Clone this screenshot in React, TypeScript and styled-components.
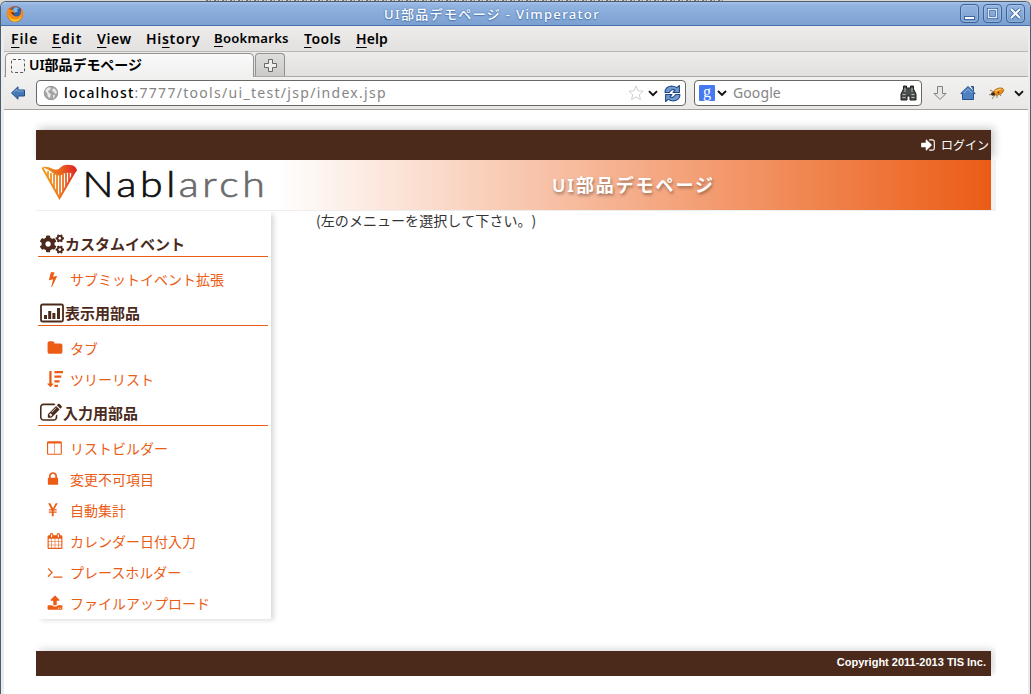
import React from "react";
import styled, { createGlobalStyle } from "styled-components";
import { FaCogs } from "react-icons/fa";

const BROWN = "#4b2a1b";
const ORANGE = "#eb5c15";
const UI = `"Noto Sans", "Noto Sans CJK JP", sans-serif`;
const JP = `"Noto Sans CJK JP", sans-serif`;

const GlobalStyle = createGlobalStyle`
  * { box-sizing: border-box; }
  body { margin: 0; background: #fff; overflow: hidden; }
`;

const Desktop = styled.div`
  width: 1031px;
  height: 694px;
  display: flex;
  flex-direction: column;
  background: #d9d9d1;
  overflow: hidden;
`;
const Backdrop = styled.div`
  height: 1px;
  flex: none;
  margin-left: 206px;
  width: 518px;
  background: repeating-linear-gradient(90deg, #77746c 0 2px, #c9c8c0 2px 4px, #8d8a80 4px 5px, #d9d9d1 5px 8px);
`;
const Frame = styled.div`
  flex: 1;
  display: flex;
  flex-direction: column;
  background: #ececea;
  border: 1px solid #4c5d72;
  border-bottom: 0;
  border-radius: 6px 6px 0 0;
  overflow: hidden;
`;
const TitleBar = styled.div`
  height: 24px;
  flex: none;
  display: flex;
  align-items: center;
  padding: 0 5px 0 5px;
  background: linear-gradient(#a5c2e9, #92b3e0 15%, #7ba0d1);
  border-bottom: 1px solid #4673ab;
`;
const WindowTitle = styled.div`
  flex: 1;
  padding-left: 0;
  text-align: center;
  font: 500 13px/22px ${UI};
  letter-spacing: 1.35px;
  color: #fff;
  text-shadow: 0 0 2px #3f6aa5, 0 1px 1px #5580b8;
  white-space: nowrap;
`;
const WindowButtons = styled.div`
  display: flex;
  gap: 4px;
`;
const WindowButton = styled.div`
  width: 19px;
  height: 19px;
  border: 1px solid #3c6396;
  border-radius: 4px;
  background: linear-gradient(#94b5e1, #799fd0);
  box-shadow: inset 0 0 0 1px rgba(255, 255, 255, 0.18);
  svg { display: block; }
`;
const Chrome = styled.div`
  flex: 1;
  display: flex;
  flex-direction: column;
  margin: 0 2px 0 3px;
  min-height: 0;
`;
const MenuBar = styled.div`
  height: 26px;
  flex: none;
  display: flex;
  padding-left: 7px;
  background: linear-gradient(#edecea, #e2e1df);
  border-bottom: 1px solid #b9b8b6;
  font: 600 14px/25px ${UI};
  color: #000;
`;
const MenuItem = styled.div<{ $w: number; $ls?: number; $fs?: number }>`
  width: ${(p) => p.$w}px;
  font-size: ${(p) => p.$fs ?? 14}px;
  letter-spacing: ${(p) => p.$ls ?? 0.6}px;
  white-space: nowrap;
  u { text-decoration-thickness: 1px; text-underline-offset: 3px; text-decoration-skip-ink: none; }
`;
const TabStrip = styled.div`
  height: 25px;
  flex: none;
  display: flex;
  gap: 1px;
  padding: 1px 0 0 1px;
  background: linear-gradient(#edecea, #e1e0de);
  border-bottom: 1px solid #aaa9a7;
`;
const Tab = styled.div`
  width: 249px;
  height: 24px;
  display: flex;
  align-items: center;
  gap: 4px;
  padding-left: 5px;
  border: 1px solid #929190;
  border-bottom: 0;
  border-radius: 5px 5px 0 0;
  background: linear-gradient(#fafafa, #f0f0ef);
  font: 600 14px/20px ${UI};
  color: #000;
  white-space: nowrap;
`;
const TabTitle = styled.span`
  padding-bottom: 2px;
  letter-spacing: -0.05px;
`;
const EmptyFavicon = styled.span`
  width: 14px;
  height: 14px;
  border: 1px dashed #555;
  border-radius: 2px;
`;
const NewTab = styled.div`
  width: 30px;
  height: 23px;
  border: 1px solid #929190;
  border-bottom: 0;
  border-radius: 4px 4px 0 0;
  background: linear-gradient(#dededd, #cbcac8);
  display: flex;
  align-items: center;
  justify-content: center;
`;
const NavBar = styled.div`
  height: 33px;
  flex: none;
  display: flex;
  align-items: center;
  padding-left: 6px;
  background: linear-gradient(#f1f1f0, #e9e8e6);
  border-bottom: 1px solid #a3a2a0;
`;
const Field = styled.div<{ $w: number; $ml: number; $pl: number }>`
  width: ${(p) => p.$w}px;
  height: 26px;
  flex: none;
  margin-left: ${(p) => p.$ml}px;
  padding: 0 4px 0 ${(p) => p.$pl}px;
  display: flex;
  align-items: center;
  background: #fff;
  border: 1px solid #686764;
  border-radius: 4px;
  font: 400 14px/22px ${UI};
  color: #858585;
  white-space: nowrap;
`;
const Url = styled.span`
  flex: 1;
  padding-left: 5px;
  letter-spacing: 1.3px;
  b { font-weight: 500; color: #000; letter-spacing: 1.1px; }
`;
const SearchText = styled.span`
  flex: 1;
  padding-left: 4px;
  letter-spacing: 0.1px;
`;
const EngineBadge = styled.span`
  width: 16px;
  height: 16px;
  flex: none;
  border-radius: 1px;
  background: #4479f0;
  color: #fff;
  text-align: center;
  font: 16px/13px "Liberation Serif", serif;
`;
const NavIcons = styled.div`
  display: flex;
  align-items: center;
  gap: 12px;
  margin-left: 10px;
`;
const Viewport = styled.div`
  flex: 1;
  min-height: 0;
  padding: 20px 0 0 32px;
  background: #fff;
  overflow: hidden;
`;
const Site = styled.div`
  width: 955px;
  color: #333;
  font: 400 14px/20px ${JP};
`;
const TopBar = styled.div`
  height: 30px;
  display: flex;
  justify-content: flex-end;
  align-items: center;
  gap: 5px;
  padding-right: 2px;
  background: ${BROWN};
  color: #fff;
  font-size: 12px;
  box-shadow: 3px -2px 8px rgba(0, 0, 0, 0.22);
`;
const Banner = styled.header`
  position: relative;
  height: 51px;
  display: flex;
  background: #fff;
  border-bottom: 1px solid #eee;
  box-shadow: 5px 0 0 #f1f1f1;
`;
const Logo = styled.div`
  width: 240px;
  height: 50px;
`;
const BannerTitle = styled.h1`
  flex: 1;
  margin: 0;
  height: 50px;
  padding-left: 276px;
  background: linear-gradient(90deg, #fff, ${ORANGE});
  color: #fff;
  font: 600 18px/50px ${UI};
  letter-spacing: 1.9px;
  text-shadow: 1px 2px 3px rgba(70, 50, 40, 0.5);
  white-space: nowrap;
`;
const Body = styled.div`
  display: flex;
  align-items: flex-start;
`;
const SideNav = styled.nav`
  width: 235px;
  height: 408px;
  padding: 21px 3px 0 2px;
  background: #fff;
  box-shadow: 4px 2px 5px -1px rgba(0, 0, 0, 0.15);
  clip-path: inset(0 -12px -12px 0);
`;
const Group = styled.h2`
  height: 25px;
  margin: 0 0 6px;
  display: flex;
  align-items: center;
  gap: 1px;
  padding-left: 2px;
  border-bottom: 1px solid ${ORANGE};
  color: ${BROWN};
  font: 600 15px/24px ${JP};
  white-space: nowrap;
`;
const Item = styled.div`
  height: 31px;
  display: flex;
  align-items: center;
  padding-left: 9px;
  color: ${ORANGE};
  font-size: 14px;
  white-space: nowrap;
`;
const ItemIcon = styled.span<{ $narrow?: boolean }>`
  width: 23px;
  height: 16px;
  svg { display: block; margin-left: ${(p) => (p.$narrow ? -2.5 : 0.4)}px; }
`;
const Spacer = styled.div<{ $h: number }>`
  height: ${(p) => p.$h}px;
`;
const Message = styled.p`
  margin: -1px 0 0 45px;
  letter-spacing: 0.05px;
  text-spacing-trim: space-all;
  font-kerning: none;
`;
const Footer = styled.footer`
  height: 25px;
  margin-top: 32px;
  padding-right: 5px;
  background: ${BROWN};
  color: #fff;
  text-align: right;
  font: bold 11px/23px "Liberation Sans", sans-serif;
  box-shadow: 3px -2px 7px rgba(0, 0, 0, 0.15);
  clip-path: inset(-10px -5px 0 0);
`;

const Glyph = ({ d, size = 16 }: { d: string; size?: number }) => (
  <svg width={size} height={size} viewBox="0 0 1792 1792" fill="currentColor">
    <path d={d} />
  </svg>
);

const BOLT = "M1333 566q18 20 7 44l-540 1157q-13 25-42 25-4 0-14-2-17-5-25.500-19t-4.500-30l197-808-406 101q-4 1-12 1-18 0-31-11-18-15-13-39l201-825q4-14 16-23t28-9h328q19 0 32 12.500t13 29.500q0 8-5 18l-171 463 396-98q8-2 12-2 19 0 34 15z";
const FOLDER = "M1728 608v704q0 92-66 158t-158 66h-1216q-92 0-158-66t-66-158v-960q0-92 66-158t158-66h320q92 0 158 66t66 158v32h672q92 0 158 66t66 158z";
const SORT = "M736 1440q0 12-10 24l-319 319q-10 9-23 9-12 0-23-9l-320-320q-15-16-7-35 8-20 30-20h192v-1376q0-14 9-23t23-9h192q14 0 23 9t9 23v1376h192q14 0 23 9t9 23zM832 0h960v256h-960zM832 512h768v256h-768zM832 1024h576v256h-576zM832 1536h384v256h-384z";
const COLUMNS = "M160 1536h672v-1152h-704v1120q0 13 9.500 22.500t22.500 9.500zm1376-32v-1120h-640v1152h608q13 0 22.500-9.500t9.500-22.500zm128-1216v1216q0 66-47 113t-113 47h-1344q-66 0-113-47t-47-113v-1216q0-66 47-113t113-47h1344q66 0 113 47t47 113z";
const LOCK = "M640 768h512v-192q0-106-75-181t-181-75-181 75-75 181v192zm832 96v576q0 40-28 68t-68 28h-960q-40 0-68-28t-28-68v-576q0-40 28-68t68-28h32v-192q0-184 132-316t316-132 316 132 132 316v192h32q40 0 68 28t28 68z";
const YEN = "M360 128h240l296 560 296-560h240l-390 690h260v130h-330v120h330v130h-330v400h-210v-400h-330v-130h330v-120h-330v-130h260z";
const CALENDAR = "M192 1664h288v-288h-288v288zm352 0h320v-288h-320v288zm-352-352h288v-320h-288v320zm352 0h320v-320h-320v320zm-352-384h288v-288h-288v288zm736 736h320v-288h-320v288zm-384-736h320v-288h-320v288zm768 736h288v-288h-288v288zm-384-352h320v-320h-320v320zm-352-864v-288q0-13-9.500-22.500t-22.500-9.500h-64q-13 0-22.500 9.500t-9.500 22.500v288q0 13 9.500 22.500t22.500 9.500h64q13 0 22.500-9.500t9.500-22.500zm736 864h288v-320h-288v320zm-384-384h320v-288h-320v288zm384 0h288v-288h-288v288zm32-480v-288q0-13-9.500-22.500t-22.500-9.500h-64q-13 0-22.500 9.500t-9.500 22.500v288q0 13 9.500 22.500t22.500 9.500h64q13 0 22.500-9.500t9.500-22.500zm384-64v1280q0 52-38 90t-90 38h-1408q-52 0-90-38t-38-90v-1280q0-52 38-90t90-38h128v-96q0-66 47-113t113-47h64q66 0 113 47t47 113v96h384v-96q0-66 47-113t113-47h64q66 0 113 47t47 113v96h128q52 0 90 38t38 90z";
const TERMINAL = "M649 983l-466 466q-10 10-23 10t-23-10l-50-50q-10-10-10-23t10-23l393-393-393-393q-10-10-10-23t10-23l50-50q10-10 23-10t23 10l466 466q10 10 10 23t-10 23zm1079 457v64q0 14-9 23t-23 9h-960q-14 0-23-9t-9-23v-64q0-14 9-23t23-9h960q14 0 23 9t9 23z";
const UPLOAD = "M1344 1472q0-26-19-45t-45-19-45 19-19 45 19 45 45 19 45-19 19-45zm256 0q0-26-19-45t-45-19-45 19-19 45 19 45 45 19 45-19 19-45zm128-224v320q0 40-28 68t-68 28h-1472q-40 0-68-28t-28-68v-320q0-40 28-68t68-28h427q21 56 70.500 92t110.500 36h256q61 0 110.500-36t70.500-92h427q40 0 68 28t28 68zm-325-648q-17 40-59 40h-256v448q0 26-19 45t-45 19h-256q-26 0-45-19t-19-45v-448h-256q-42 0-59-40-17-39 14-69l448-448q18-19 45-19t45 19l448 448q31 30 14 69z";
const PENCIL = "M888 1184l116-116-152-152-116 116v56h96v96h56zm440-720q-16-16-33 1l-350 350q-17 17-1 33t33-1l350-350q17-17 1-33zm80 594v190q0 119-84.500 203.500t-203.500 84.500h-832q-119 0-203.500-84.500t-84.500-203.500v-832q0-119 84.500-203.500t203.500-84.500h832q63 0 117 25 15 7 18 23 3 17-9 29l-49 49q-14 14-32 8-23-6-45-6h-832q-66 0-113 47t-47 113v832q0 66 47 113t113 47h832q66 0 113-47t47-113v-126q0-13 9-22l64-64q15-15 35-7t20 29zm-96-738l288 288-672 672h-288v-288zm444 132l-92 92-288-288 92-92q28-28 68-28t68 28l152 152q28 28 28 68t-28 68z";
const SIGN_IN = "M1312 896q0 26-19 45l-544 544q-19 19-45 19t-45-19-19-45v-288h-448q-26 0-45-19t-19-45v-384q0-26 19-45t45-19h448v-288q0-26 19-45t45-19 45 19l544 544q19 19 19 45zm352-352v704q0 119-84.500 203.500t-203.500 84.500h-320q-13 0-22.500-9.500t-9.500-22.500q0-4-1-20t-.5-26.500 3-23.500 10-19.500 20.500-6.500h320q66 0 113-47t47-113v-704q0-66-47-113t-113-47h-312l-11.500-1-11.500-3-8-5.500-7-9-2-13.500q0-4-1-20t-.5-26.500 3-23.500 10-19.500 20.500-6.500h320q119 0 203.500 84.500t84.500 203.500z";

const FirefoxIcon = () => (
  <svg width="18" height="18" viewBox="0 0 18 18">
    <circle cx="9" cy="9" r="8" fill="#d9540c" />
    <circle cx="10" cy="7" r="5.5" fill="#2d62ad" />
    <path d="M8 2.500q3-1 5 1l-2 1 1 2-3 1-2-2z" fill="#7db7e8" />
    <path d="M2 3l2 2 3-.5q-.5 2 1.500 2.500l1 1-3 1q1 3 5 2.500 3-.5 3.500-5l.5-3q2.500 3 1.500 7-2 6-8 6T1 10.500Q.5 6 2 3z" fill="#f48a13" />
    <path d="M2.500 9q1 5 6 5.500 5 0 7-4-1 6-7 6.300Q3 16 2.500 9z" fill="#fcc52d" />
    <path d="M4.500 7l3 .5 2 1.500-3 .5z" fill="#7a2609" />
  </svg>
);

const ChevronSvg = styled.svg<{ $ml?: number }>`
  flex: none;
  margin-left: ${(p) => p.$ml ?? 0}px;
`;
const Chevron = ({ ml }: { ml?: number }) => (
  <ChevronSvg $ml={ml} width="10" height="7" viewBox="0 0 10 7">
    <path d="M1 1.200l4 4 4-4" fill="none" stroke="#111" strokeWidth="1.900" />
  </ChevronSvg>
);

const BackArrow = () => (
  <svg width="16" height="16" viewBox="0 0 16 16">
    <path d="M1.500 8L8 1.800V5h6.500v6H8v3.200z" fill="#4778b5" stroke="#1f4a85" strokeLinejoin="round" />
    <path d="M3.500 7.500L7 4v2h6.500" fill="none" stroke="#80a8d6" />
  </svg>
);

const Globe = () => (
  <svg width="16" height="16" viewBox="0 0 16 16">
    <circle cx="8" cy="8" r="7" fill="#a3a3a3" />
    <path d="M3 4l3-2 2 1-1 2-2 1 1 2 2 1-1 4-2-1-1-4-2-2zM10 3l3 2 1 3-2 1-1-2-2-1zM10 10l2 0-1 3-1 0z" fill="#e9e9e9" />
    <circle cx="8" cy="8" r="6.700" fill="none" stroke="#9a9a9a" />
  </svg>
);

const Star = styled.svg`
  margin-right: 4px;
`;
const Reload = styled.svg`
  margin-left: 6px;
`;

const HarpLogo = () => (
  <svg width="240" height="50" viewBox="0 0 240 50">
    <defs>
      <linearGradient id="harp" x1="0" x2="1" y1="0" y2="0">
        <stop offset="0" stopColor="#f0a01c" />
        <stop offset="0.550" stopColor="#e9641d" />
        <stop offset="1" stopColor="#df1f26" />
      </linearGradient>
      <linearGradient id="harpStrings" gradientUnits="userSpaceOnUse" x1="6" x2="40" y1="0" y2="0">
        <stop offset="0" stopColor="#f0a01c" />
        <stop offset="0.500" stopColor="#ec7a18" />
        <stop offset="1" stopColor="#df2a20" />
      </linearGradient>
    </defs>
    <path d="M5 7q7-1 12 2 5 2 8-2 3-3 9-2 5 0 7 5-2 4-6 3-5-1-8 1-4 3-9 0-5-5-13-7z" fill="url(#harp)" />
    <path d="M6.500 8L23.500 38 40 9.500" fill="none" stroke="url(#harpStrings)" strokeWidth="2" />
    <path d="M12 11v7M15 13v10M18 14v15M21 14v20M24 14v22M27 14v17M30 13v13M33 12v9M36 11v5" stroke="url(#harpStrings)" strokeWidth="1.700" />
    <text transform="translate(46.500 37.300) scale(1.140 1)" fontFamily="Lato, sans-serif" fontSize="36" fontWeight="300" textLength="160" lengthAdjust="spacing" fill="#111" stroke="#111" strokeWidth=".7">
      Nabl<tspan fill="#6b6b6b" stroke="#6b6b6b">arch</tspan>
    </text>
  </svg>
);

const App = () => (
  <>
    <GlobalStyle />
    <Desktop>
      <Backdrop />
      <Frame>
        <TitleBar>
          <FirefoxIcon />
          <WindowTitle>UI部品デモページ - Vimperator</WindowTitle>
          <WindowButtons>
            <WindowButton>
              <svg width="17" height="17"><rect x="3.500" y="11.500" width="10" height="3" fill="#fff" stroke="#4068a0" /></svg>
            </WindowButton>
            <WindowButton>
              <svg width="17" height="17">
                <rect x="4.500" y="4.500" width="8" height="8" fill="none" stroke="#4068a0" strokeWidth="3" />
                <rect x="4.500" y="4.500" width="8" height="8" fill="none" stroke="#dfeafa" strokeWidth="1.400" />
              </svg>
            </WindowButton>
            <WindowButton>
              <svg width="17" height="17">
                <path d="M4 4l9 9M13 4l-9 9" stroke="#4068a0" strokeWidth="3.800" />
                <path d="M4 4l9 9M13 4l-9 9" stroke="#fff" strokeWidth="2" />
              </svg>
            </WindowButton>
          </WindowButtons>
        </TitleBar>
        <Chrome>
          <MenuBar>
            <MenuItem $w={41} $ls={0.9}><u>F</u>ile</MenuItem>
            <MenuItem $w={45} $ls={1.1}><u>E</u>dit</MenuItem>
            <MenuItem $w={49} $ls={0.6}><u>V</u>iew</MenuItem>
            <MenuItem $w={68} $ls={0.7}>Hi<u>s</u>tory</MenuItem>
            <MenuItem $w={90} $ls={0.25} $fs={13.1}><u>B</u>ookmarks</MenuItem>
            <MenuItem $w={52} $ls={0.4}><u>T</u>ools</MenuItem>
            <MenuItem $w={40} $ls={0.1}><u>H</u>elp</MenuItem>
          </MenuBar>
          <TabStrip>
            <Tab>
              <EmptyFavicon />
              <TabTitle>UI部品デモページ</TabTitle>
            </Tab>
            <NewTab>
              <svg width="13" height="13">
                <path d="M4.500 .5h4v4h4v4h-4v4h-4v-4h-4v-4h4z" fill="#eee" stroke="#666" />
              </svg>
            </NewTab>
          </TabStrip>
          <NavBar>
            <BackArrow />
            <Field $w={650} $ml={10} $pl={6}>
              <Globe />
              <Url><b>localhost</b>:7777/tools/ui_test/jsp/index.jsp</Url>
              <Star width="16" height="16" viewBox="0 0 16 16">
                <path d="M8 1l2.100 4.700 5 .5-3.800 3.400 1.100 5L8 12l-4.400 2.600 1.100-5L1 6.200l5-.5z" fill="#fff" stroke="#cfcfcf" />
              </Star>
              <Chevron />
              <Reload width="17" height="17" viewBox="0 0 16 16">
                <path d="M1 7q0-5.500 6-6 3 0 5 1.500l2.500-2v6.500H8.500l2-2q-3-2-5.500 2zM15 9q0 5.500-6 6-3 0-5-1.500l-2.500 2V9h6l-2 2q3 2 5.500-2z" fill="#6f9bd0" stroke="#1f4680" strokeLinejoin="round" />
              </Reload>
            </Field>
            <Field $w={228} $ml={8} $pl={4}>
              <EngineBadge>g</EngineBadge>
              <svg width="14" height="16"><path d="M3 6l4 4 4-4" fill="none" stroke="#111" strokeWidth="1.900" /></svg>
              <SearchText>Google</SearchText>
              <svg width="17" height="16" viewBox="0 0 17 16">
                <path d="M3.500 1h3v2h4V1h3v3l2.500 5v6h-6v-4h-3v4H1V9l2.500-5z" fill="#4b4f4c" stroke="#1e201f" />
                <path d="M2.500 9.500h3M11.500 9.500h3M2.500 12.500h3M11.500 12.500h3M5 3v4M12 3v4" stroke="#b6bab7" />
              </svg>
            </Field>
            <NavIcons>
              <svg width="16" height="16">
                <path d="M5.500 1.500h5v7h3.500L8 14.500 2 8.500h3.500z" fill="#e4e6e3" stroke="#80827f" strokeLinejoin="round" />
              </svg>
              <svg width="16" height="16">
                <path d="M11 1.500h2.500V6" fill="#4778b5" stroke="#24508d" />
                <path d="M.8 8.500L8 1.500l7.200 7H13.500v6h-11v-6z" fill="#4f82c0" stroke="#24508d" strokeLinejoin="round" />
                <path d="M4 8l4-4 4 4" fill="none" stroke="#89b0dc" />
              </svg>
              <svg width="17" height="16">
                <path d="M2 5l4 2M1 10l4-1M4 14l3-4M9 13v-3M13 11l-2-3" stroke="#8e7c62" />
                <ellipse cx="10.500" cy="6.500" rx="5.500" ry="3.200" transform="rotate(-22 10.500 6.500)" fill="#e88f19" stroke="#9c540c" strokeWidth=".6" />
                <ellipse cx="5" cy="9" rx="2" ry="1.700" fill="#3b2411" />
                <path d="M7 6l6-2" stroke="#ffd873" strokeWidth="1.300" />
                <circle cx="10.500" cy="7.500" r=".9" fill="#782e08" />
              </svg>
              <Chevron ml={-3} />
            </NavIcons>
          </NavBar>
          <Viewport>
            <Site>
              <TopBar>
                <Glyph d={SIGN_IN} />
                <span>ログイン</span>
              </TopBar>
              <Banner>
                <Logo><HarpLogo /></Logo>
                <BannerTitle>UI部品デモページ</BannerTitle>
              </Banner>
              <Body>
                <SideNav>
                  <Group><FaCogs size={24} />カスタムイベント</Group>
                  <Item><ItemIcon $narrow><Glyph d={BOLT} /></ItemIcon>サブミットイベント拡張</Item>
                  <Spacer $h={7} />
                  <Group>
                    <svg width="24" height="20">
                      <rect x="1" y="1.500" width="22" height="17" rx="1.500" fill="none" stroke={BROWN} strokeWidth="1.800" />
                      <path d="M4 12h3v4H4zM8.200 8h3v8h-3zM12.400 10h3v6h-3zM17 5h3v11h-3z" fill={BROWN} />
                    </svg>
                    表示用部品
                  </Group>
                  <Item><ItemIcon><Glyph d={FOLDER} /></ItemIcon>タブ</Item>
                  <Item><ItemIcon><Glyph d={SORT} /></ItemIcon>ツリーリスト</Item>
                  <Spacer $h={7} />
                  <Group><Glyph d={PENCIL} size={22} />入力用部品</Group>
                  <Item><ItemIcon><Glyph d={COLUMNS} /></ItemIcon>リストビルダー</Item>
                  <Item><ItemIcon $narrow><Glyph d={LOCK} /></ItemIcon>変更不可項目</Item>
                  <Item><ItemIcon $narrow><Glyph d={YEN} /></ItemIcon>自動集計</Item>
                  <Item><ItemIcon><Glyph d={CALENDAR} /></ItemIcon>カレンダー日付入力</Item>
                  <Item><ItemIcon><Glyph d={TERMINAL} /></ItemIcon>プレースホルダー</Item>
                  <Item><ItemIcon><Glyph d={UPLOAD} /></ItemIcon>ファイルアップロード</Item>
                </SideNav>
                <Message>(左のメニューを選択して下さい。)</Message>
              </Body>
              <Footer>Copyright 2011-2013 TIS Inc.</Footer>
            </Site>
          </Viewport>
        </Chrome>
      </Frame>
    </Desktop>
  </>
);

export default App;
